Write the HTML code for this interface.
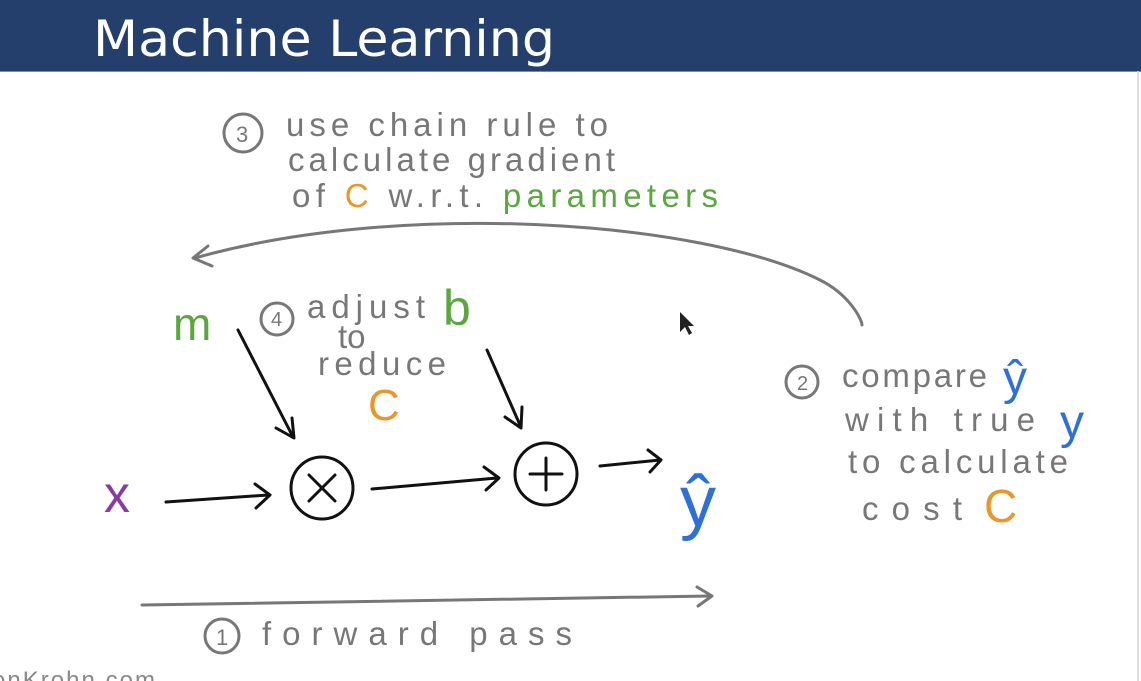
<!DOCTYPE html>
<html><head><style>
html,body{margin:0;padding:0;background:#fff;}
body{width:1141px;height:681px;overflow:hidden;position:relative;font-family:"Liberation Sans",sans-serif;}
.hdr{position:absolute;left:0;top:0;width:1141px;height:71px;background:#243f6b;border-bottom:1px solid #7a88a0;}
svg{position:absolute;left:0;top:0;}
</style></head><body>
<div class="hdr"></div>
<svg width="1141" height="681" viewBox="0 0 1141 681" fill="none" stroke-linecap="round" stroke-linejoin="round">
<text x="93" y="56" font-family="DejaVu Sans, sans-serif" font-size="50" fill="#fff" textLength="462" lengthAdjust="spacingAndGlyphs">Machine Learning</text>
<line x1="1138" y1="72" x2="1138" y2="681" stroke="#ddd" stroke-width="2"/>
<g font-family="Liberation Sans, sans-serif" font-size="33" fill="#777" stroke="none">
<text x="286" y="136" textLength="322" lengthAdjust="spacing">use chain rule to</text>
<text x="288" y="171" textLength="327" lengthAdjust="spacing">calculate gradient</text>
<text x="292" y="207" textLength="426" lengthAdjust="spacing">of <tspan fill="#e8962e">C</tspan> w.r.t. <tspan fill="#5aa640">parameters</tspan></text>
<text x="307" y="318" textLength="118" lengthAdjust="spacing">adjust</text>
<text x="338" y="348">to</text>
<text x="318" y="375" textLength="128" lengthAdjust="spacing">reduce</text>
<text x="368" y="420" fill="#e8962e" font-size="44">C</text>
<text x="842" y="387" textLength="145" lengthAdjust="spacing">compare</text>
<text x="1003" y="394" fill="#2f6fd8" font-size="48">ŷ</text>
<text x="845" y="431" textLength="190" lengthAdjust="spacing">with true</text>
<text x="1060" y="438" fill="#2f6fd8" font-size="48">y</text>
<text x="848" y="473" textLength="220" lengthAdjust="spacing">to calculate</text>
<text x="862" y="520" textLength="100" lengthAdjust="spacing">cost</text>
<text x="984" y="522" fill="#e8962e" font-size="46">C</text>
<text x="262" y="645" textLength="310" lengthAdjust="spacing">forward pass</text>
<text x="-8" y="688" font-size="24" fill="#888" textLength="163" lengthAdjust="spacing">onKrohn.com</text>
<text x="173" y="340" fill="#5aa640" font-size="46">m</text>
<text x="443" y="325" fill="#5aa640" font-size="50">b</text>
<text x="104" y="512" fill="#8a3aa8" font-size="52">x</text>
<text x="680" y="526" fill="#2f6fd8" font-size="72">ŷ</text>
<text x="236" y="142" font-size="22">3</text>
<text x="271" y="326" font-size="20">4</text>
<text x="797" y="390" font-size="20">2</text>
<text x="216" y="645" font-size="22">1</text>
</g>
<g stroke="#777" stroke-width="3">
<circle cx="243" cy="133" r="19"/>
<circle cx="277" cy="319" r="16"/>
<circle cx="802" cy="382" r="16"/>
<circle cx="222" cy="636" r="17"/>
<path d="M195 258 C400 200 700 220 820 280 C850 295 862 320 862 325"/>
<path d="M208 246 L193 258 L212 266"/>
<path d="M142 605 L710 596"/>
<path d="M697 587 L712 596 L698 606"/>
</g>
<g stroke="#111" stroke-width="3">
<circle cx="322" cy="488" r="31"/>
<path d="M309 475 L335 501 M335 475 L309 501"/>
<circle cx="546" cy="474" r="31"/>
<path d="M546 458 L546 490 M530 474 L562 474"/>
<path d="M166 502 L268 495 M255 484 L270 495 L256 508"/>
<path d="M372 489 L497 478 M484 467 L499 478 L486 490"/>
<path d="M600 466 L660 460 M648 450 L661 460 L650 472"/>
<path d="M238 330 L292 435 M292 418 L294 438 L276 428"/>
<path d="M487 350 L520 425 M522 407 L521 428 L505 417"/>
</g>
<path d="M680 312 L680 332 L685 327 L689 335 L692 333 L688 326 L694 326 Z" fill="#222"/>
</svg>
</body></html>
